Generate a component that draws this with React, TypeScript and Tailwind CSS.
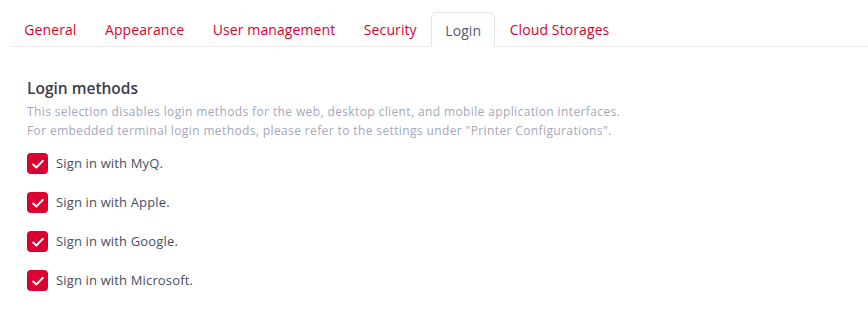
import React from "react";

const TABS = ["General", "Appearance", "User management", "Security", "Login", "Cloud Storages"];
const METHODS = ["MyQ", "Apple", "Google", "Microsoft"];

const Check = () => (
  <span className="flex h-[21px] w-[21px] shrink-0 items-center justify-center rounded-[4px] bg-[#dc0032]">
    <svg width="14" height="14" viewBox="0 0 16 16" fill="none">
      <path d="M2.5 8.6l3.6 3.4L13.5 4.4" stroke="white" strokeWidth="2.3" strokeLinecap="round" strokeLinejoin="round" />
    </svg>
  </span>
);

export default function App() {
  return (
    <div className="h-[335px] w-[868px] bg-white pl-[10px] font-['Open_Sans',sans-serif]">
      <div className="flex border-b border-[#ebebf0] pt-[12px]">
        {TABS.map((t) => {
          const active = t === "Login";
          return (
            <div
              key={t}
              className={
                active
                  ? "-mb-px flex h-[35px] items-center rounded-t-[6px] border border-b-0 border-[#e3e3ee] bg-white px-[13.25px] text-[14px] tracking-[0.1px] text-[#565b73]"
                  : "flex h-[34px] items-center border border-transparent px-[13.25px] text-[14px] tracking-[0.1px] text-[#dc0032]"
              }
            >
              {t}
            </div>
          );
        })}
      </div>

      <div className="pl-[17px] pt-[30px]">
        <h2 className="text-[15.5px] leading-[22px] font-semibold text-[#3b3e4b]">Login methods</h2>
        <p className="mt-[3px] text-[12px] leading-[19px] tracking-[0.38px] text-[#a4a7ba]">
          This selection disables login methods for the web, desktop client, and mobile application interfaces.
          <br />
          For embedded terminal login methods, please refer to the settings under "Printer Configurations".
        </p>
        <div className="mt-[13px] flex flex-col gap-[18px]">
          {METHODS.map((m) => (
            <label key={m} className="flex items-center gap-[8px] text-[13px] tracking-[0.15px] text-[#4a4e5f]">
              <Check />
              <span>Sign in with {m}.</span>
            </label>
          ))}
        </div>
      </div>
    </div>
  );
}
